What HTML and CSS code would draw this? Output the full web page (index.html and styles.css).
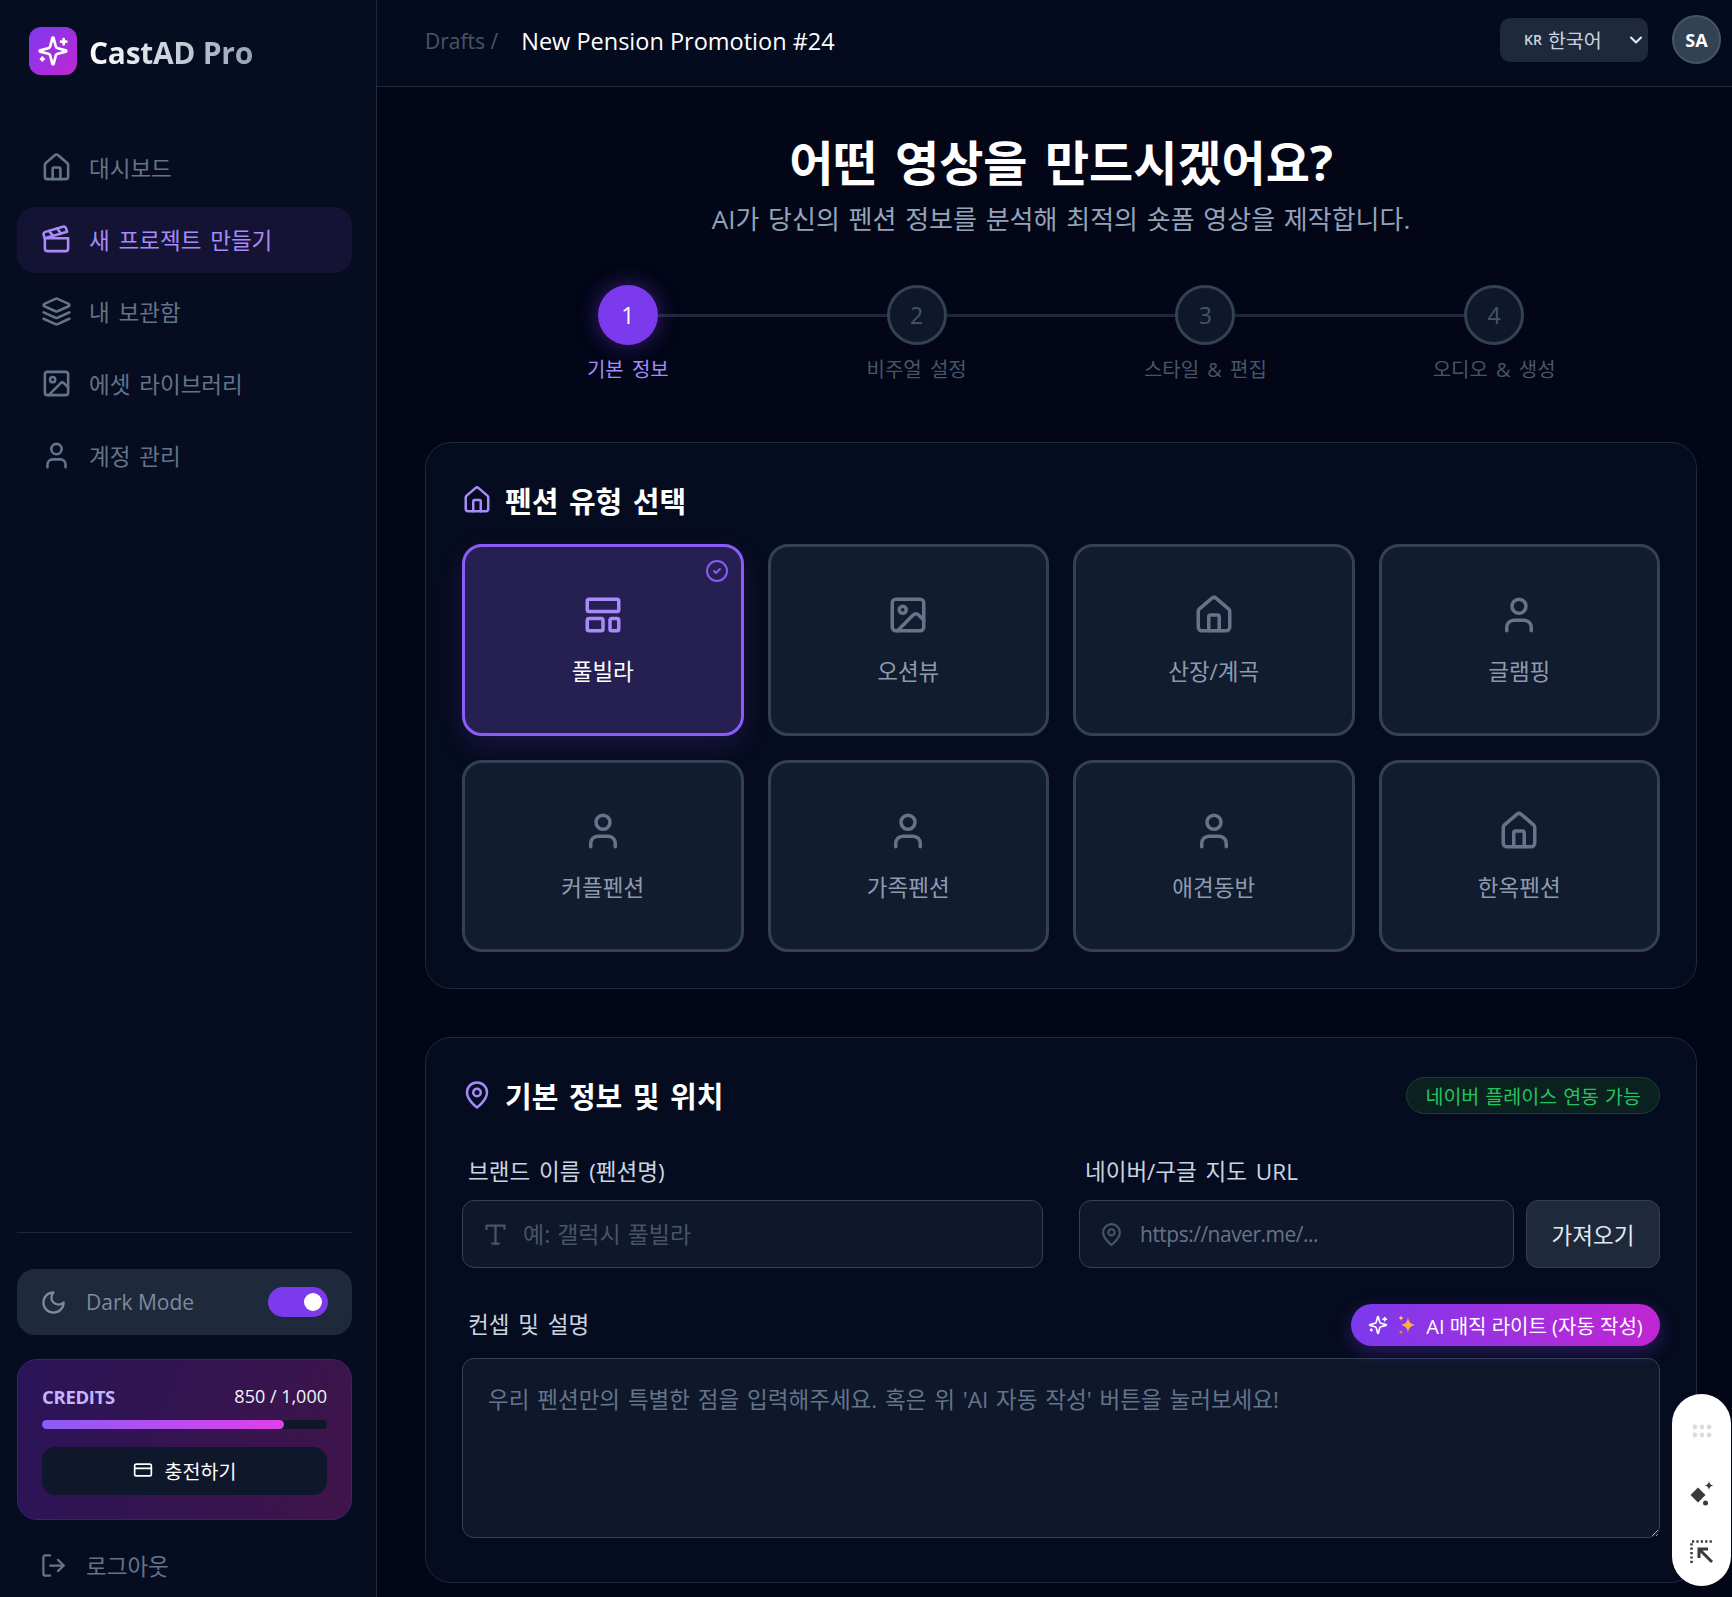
FILE: index.html
```html
<!doctype html>
<html lang="ko">
  <head>
    <meta charset="UTF-8" />
    <meta name="viewport" content="width=device-width, initial-scale=1.0" />
    <title>CastAD Pro</title>
    <link rel="stylesheet" href="styles.css">
  </head>
  <body>
    <aside class="sidebar">
      <div class="brand">
        <div class="brand-logo">
          <svg class="icon" width="32" height="32" viewBox="0 0 24 24"><path d="M9.937 15.5A2 2 0 0 0 8.5 14.063l-6.135-1.582a.5.5 0 0 1 0-.962L8.5 9.936A2 2 0 0 0 9.937 8.5l1.582-6.135a.5.5 0 0 1 .963 0L14.063 8.5A2 2 0 0 0 15.5 9.937l6.135 1.581a.5.5 0 0 1 0 .964L15.5 14.063a2 2 0 0 0-1.437 1.437l-1.582 6.135a.5.5 0 0 1-.963 0z"/><path d="M20 3v4M22 5h-4M4 17v2M5 18H3"/></svg>
        </div>
        <span class="brand-name">CastAD Pro</span>
      </div>

      <nav class="nav">
        <a class="nav-item">
          <svg class="icon" width="31" height="31" viewBox="0 0 24 24"><path d="M15 21v-8a1 1 0 0 0-1-1h-4a1 1 0 0 0-1 1v8"/><path d="M3 10a2 2 0 0 1 .709-1.528l7-5.999a2 2 0 0 1 2.582 0l7 5.999A2 2 0 0 1 21 10v9a2 2 0 0 1-2 2H5a2 2 0 0 1-2-2z"/></svg>
          대시보드
        </a>
        <a class="nav-item active">
          <svg class="icon" width="31" height="31" viewBox="0 0 24 24"><path d="M20.2 6 3 11l-.9-2.4c-.3-1.1.3-2.2 1.3-2.5l13.5-4c1.1-.3 2.2.3 2.5 1.3Z"/><path d="m6.2 5.3 3.1 3.9M12.4 3.4l3.1 4"/><path d="M3 11h18v8a2 2 0 0 1-2 2H5a2 2 0 0 1-2-2Z"/></svg>
          새 프로젝트 만들기
        </a>
        <a class="nav-item">
          <svg class="icon" width="31" height="31" viewBox="0 0 24 24"><path d="m12.83 2.18a2 2 0 0 0-1.66 0L2.6 6.08a1 1 0 0 0 0 1.83l8.58 3.91a2 2 0 0 0 1.66 0l8.58-3.9a1 1 0 0 0 0-1.83Z"/><path d="m22 17.65-9.17 4.16a2 2 0 0 1-1.66 0L2 17.65"/><path d="m22 12.65-9.17 4.16a2 2 0 0 1-1.66 0L2 12.65"/></svg>
          내 보관함
        </a>
        <a class="nav-item">
          <svg class="icon" width="31" height="31" viewBox="0 0 24 24"><rect x="3" y="3" width="18" height="18" rx="2"/><circle cx="9" cy="9" r="2"/><path d="m21 15-3.086-3.086a2 2 0 0 0-2.828 0L6 21"/></svg>
          에셋 라이브러리
        </a>
        <a class="nav-item">
          <svg class="icon" width="31" height="31" viewBox="0 0 24 24"><path d="M19 21v-2a4 4 0 0 0-4-4H9a4 4 0 0 0-4 4v2"/><circle cx="12" cy="7" r="4"/></svg>
          계정 관리
        </a>
      </nav>

      <div class="sidebar-foot">
        <div class="theme-row">
          <svg class="icon" width="27" height="27" viewBox="0 0 24 24"><path d="M12 3a6 6 0 0 0 9 9 9 9 0 1 1-9-9Z"/></svg>
          <span class="theme-label">Dark Mode</span>
          <span class="toggle"><span class="knob"></span></span>
        </div>

        <div class="credits">
          <div class="credits-top">
            <span class="credits-title">CREDITS</span>
            <span>850 / 1,000</span>
          </div>
          <div class="bar"><div class="bar-fill" style="width: 85%"></div></div>
          <button class="charge-btn">
            <svg class="icon" width="20" height="20" viewBox="0 0 24 24"><rect x="2" y="5" width="20" height="14" rx="2"/><path d="M2 10h20"/></svg>
            충전하기
          </button>
        </div>

        <a class="logout">
          <svg class="icon" width="27" height="27" viewBox="0 0 24 24"><path d="M9 21H5a2 2 0 0 1-2-2V5a2 2 0 0 1 2-2h4"/><path d="m16 17 5-5-5-5"/><path d="M21 12H9"/></svg>
          로그아웃
        </a>
      </div>
    </aside>

    <div class="main">
      <header class="topbar">
        <div class="crumbs">
          <span class="crumb-parent">Drafts /</span>
          <span class="crumb-current">New Pension Promotion #24</span>
        </div>
        <div class="lang">
          <span class="lang-flag">KR</span> 한국어
          <svg class="icon lang-caret" width="20" height="20" viewBox="0 0 24 24"><path d="m6 9 6 6 6-6"/></svg>
        </div>
        <div class="avatar">SA</div>
      </header>

      <main class="content">
        <div class="hero">
          <h1>어떤 영상을 만드시겠어요?</h1>
          <p>AI가 당신의 펜션 정보를 분석해 최적의 숏폼 영상을 제작합니다.</p>
        </div>

        <ol class="steps">
          <li class="step active"><span class="step-num">1</span><span class="step-label">기본 정보</span></li>
          <li class="step"><span class="step-num">2</span><span class="step-label">비주얼 설정</span></li>
          <li class="step"><span class="step-num">3</span><span class="step-label">스타일 &amp; 편집</span></li>
          <li class="step"><span class="step-num">4</span><span class="step-label">오디오 &amp; 생성</span></li>
        </ol>

        <section class="panel panel-types">
          <div class="panel-head">
            <h2>
              <svg class="icon accent" width="30" height="30" viewBox="0 0 24 24"><path d="M15 21v-8a1 1 0 0 0-1-1h-4a1 1 0 0 0-1 1v8"/><path d="M3 10a2 2 0 0 1 .709-1.528l7-5.999a2 2 0 0 1 2.582 0l7 5.999A2 2 0 0 1 21 10v9a2 2 0 0 1-2 2H5a2 2 0 0 1-2-2z"/></svg>
              펜션 유형 선택
            </h2>
          </div>
          <div class="type-grid">
            <button class="type-card selected">
              <svg class="icon check" width="24" height="24" viewBox="0 0 24 24"><circle cx="12" cy="12" r="10"/><path d="m9 12 2 2 4-4"/></svg>
              <svg class="icon" width="42" height="42" viewBox="0 0 24 24"><rect x="3" y="3" width="18" height="7" rx="1"/><rect x="3" y="14" width="9" height="7" rx="1"/><rect x="16" y="14" width="5" height="7" rx="1"/></svg>
              풀빌라
            </button>
            <button class="type-card">
              <svg class="icon" width="42" height="42" viewBox="0 0 24 24"><rect x="3" y="3" width="18" height="18" rx="2"/><circle cx="9" cy="9" r="2"/><path d="m21 15-3.086-3.086a2 2 0 0 0-2.828 0L6 21"/></svg>
              오션뷰
            </button>
            <button class="type-card">
              <svg class="icon" width="42" height="42" viewBox="0 0 24 24"><path d="M15 21v-8a1 1 0 0 0-1-1h-4a1 1 0 0 0-1 1v8"/><path d="M3 10a2 2 0 0 1 .709-1.528l7-5.999a2 2 0 0 1 2.582 0l7 5.999A2 2 0 0 1 21 10v9a2 2 0 0 1-2 2H5a2 2 0 0 1-2-2z"/></svg>
              산장/계곡
            </button>
            <button class="type-card">
              <svg class="icon" width="42" height="42" viewBox="0 0 24 24"><path d="M19 21v-2a4 4 0 0 0-4-4H9a4 4 0 0 0-4 4v2"/><circle cx="12" cy="7" r="4"/></svg>
              글램핑
            </button>
            <button class="type-card">
              <svg class="icon" width="42" height="42" viewBox="0 0 24 24"><path d="M19 21v-2a4 4 0 0 0-4-4H9a4 4 0 0 0-4 4v2"/><circle cx="12" cy="7" r="4"/></svg>
              커플펜션
            </button>
            <button class="type-card">
              <svg class="icon" width="42" height="42" viewBox="0 0 24 24"><path d="M19 21v-2a4 4 0 0 0-4-4H9a4 4 0 0 0-4 4v2"/><circle cx="12" cy="7" r="4"/></svg>
              가족펜션
            </button>
            <button class="type-card">
              <svg class="icon" width="42" height="42" viewBox="0 0 24 24"><path d="M19 21v-2a4 4 0 0 0-4-4H9a4 4 0 0 0-4 4v2"/><circle cx="12" cy="7" r="4"/></svg>
              애견동반
            </button>
            <button class="type-card">
              <svg class="icon" width="42" height="42" viewBox="0 0 24 24"><path d="M15 21v-8a1 1 0 0 0-1-1h-4a1 1 0 0 0-1 1v8"/><path d="M3 10a2 2 0 0 1 .709-1.528l7-5.999a2 2 0 0 1 2.582 0l7 5.999A2 2 0 0 1 21 10v9a2 2 0 0 1-2 2H5a2 2 0 0 1-2-2z"/></svg>
              한옥펜션
            </button>
          </div>
        </section>

        <section class="panel panel-info">
          <div class="panel-head">
            <h2>
              <svg class="icon accent" width="30" height="30" viewBox="0 0 24 24"><path d="M20 10c0 6-8 12-8 12s-8-6-8-12a8 8 0 0 1 16 0Z"/><circle cx="12" cy="10" r="3"/></svg>
              기본 정보 및 위치
            </h2>
            <span class="badge">네이버 플레이스 연동 가능</span>
          </div>

          <div class="field-grid">
            <div class="field">
              <label class="field-label">브랜드 이름 (펜션명)</label>
              <div class="input-box">
                <svg class="icon" width="27" height="27" viewBox="0 0 24 24"><path d="M4 7V4h16v3"/><path d="M9 20h6"/><path d="M12 4v16"/></svg>
                <input type="text" placeholder="예: 갤럭시 풀빌라" />
              </div>
            </div>
            <div class="field">
              <label class="field-label">네이버/구글 지도 URL</label>
              <div class="input-row">
                <div class="input-box">
                  <svg class="icon" width="25" height="25" viewBox="0 0 24 24"><path d="M20 10c0 6-8 12-8 12s-8-6-8-12a8 8 0 0 1 16 0Z"/><circle cx="12" cy="10" r="3"/></svg>
                  <input class="url-input" type="text" placeholder="https://naver.me/..." />
                </div>
                <button class="fetch-btn">가져오기</button>
              </div>
            </div>
          </div>

          <div class="concept-head">
            <label class="field-label">컨셉 및 설명</label>
            <button class="magic-btn">
              <svg class="icon" width="20" height="20" viewBox="0 0 24 24"><path d="M9.937 15.5A2 2 0 0 0 8.5 14.063l-6.135-1.582a.5.5 0 0 1 0-.962L8.5 9.936A2 2 0 0 0 9.937 8.5l1.582-6.135a.5.5 0 0 1 .963 0L14.063 8.5A2 2 0 0 0 15.5 9.937l6.135 1.581a.5.5 0 0 1 0 .964L15.5 14.063a2 2 0 0 0-1.437 1.437l-1.582 6.135a.5.5 0 0 1-.963 0z"/><path d="M20 3v4M22 5h-4M4 17v2M5 18H3"/></svg>
              <svg width="20" height="22" viewBox="0 0 20 22"><path fill="#fbb040" d="M11 3c.8 5 2 6.500 7 8-5 1.500-6.200 3-7 8-.8-5-2-6.500-7-8 5-1.500 6.200-3 7-8z"/><path fill="#fcd34d" d="M4 1c.3 1.800.8 2.400 2.500 3C4.800 4.600 4.300 5.200 4 7c-.3-1.800-.8-2.400-2.500-3C3.200 3.400 3.700 2.800 4 1z"/><path fill="#f59e0b" d="M4 16c.2 1.300.6 1.800 2 2.200-1.400.5-1.800 1-2 2.300-.2-1.300-.6-1.800-2-2.300 1.400-.4 1.800-.9 2-2.200z"/></svg>
              AI 매직 라이트 (자동 작성)
            </button>
          </div>
          <textarea placeholder="우리 펜션만의 특별한 점을 입력해주세요. 혹은 위 'AI 자동 작성' 버튼을 눌러보세요!"></textarea>
        </section>
      </main>
    </div>

    <div class="float-tools">
      <svg width="20" height="14" viewBox="0 0 20 14" fill="#dcdcdc"><circle cx="3" cy="3" r="2.400"/><circle cx="10" cy="3" r="2.400"/><circle cx="17" cy="3" r="2.400"/><circle cx="3" cy="11" r="2.400"/><circle cx="10" cy="11" r="2.400"/><circle cx="17" cy="11" r="2.400"/></svg>
      <svg width="28" height="28" viewBox="0 0 28 28" fill="#3a3a3a"><path d="M10 7.500l7.500 7.500-7.500 7.500L2.500 15z"/><path d="M21 1c.6 3 1.400 3.800 4.500 4.500C22.400 6.200 21.600 7 21 10c-.6-3-1.400-3.800-4.500-4.500C19.600 4.800 20.400 4 21 1z"/><circle cx="17.500" cy="23" r="2.500"/></svg>
      <svg width="24" height="24" viewBox="0 0 24 24" fill="none" stroke="#3a3a3a"><path d="M1.500 23V1.500H23" stroke-width="2.500" stroke-dasharray="2.200 2.200"/><path d="M22 22 10 10M9 18V9h9" stroke-width="3"/></svg>
    </div>
  </body>
</html>
```

FILE: styles.css
```css
* {
  box-sizing: border-box;
}
body {
  margin: 0;
  display: flex;
  height: 100vh;
  overflow: hidden;
  background: #020617;
  color: #fff;
  font-family: 'Open Sans', 'Noto Sans CJK KR', sans-serif;
}
button,
input,
textarea {
  font-family: inherit;
}
.icon {
  fill: none;
  stroke: currentColor;
  stroke-width: 2;
  stroke-linecap: round;
  stroke-linejoin: round;
  flex-shrink: 0;
}
.accent {
  color: #a78bfa;
}

/* sidebar */
.sidebar {
  width: 377px;
  flex-shrink: 0;
  display: flex;
  flex-direction: column;
  padding: 27px 24px 8px 17px;
  background: #070d20;
  border-right: 1px solid #1e293b;
}
.brand {
  display: flex;
  align-items: center;
  gap: 12px;
  padding-left: 12px;
}
.brand-logo {
  width: 48px;
  height: 48px;
  border-radius: 12px;
  display: flex;
  align-items: center;
  justify-content: center;
  background: linear-gradient(135deg, #7c3aed, #c026d3);
  color: #fff;
}
.brand-name {
  padding-top: 2px;
  font-size: 30px;
  font-weight: 700;
  letter-spacing: -0.3px;
  background: linear-gradient(90deg, #fff, #94a3b8);
  -webkit-background-clip: text;
  background-clip: text;
  color: transparent;
}
.nav {
  margin-top: 60px;
  display: flex;
  flex-direction: column;
  gap: 6px;
}
.nav-item {
  height: 66px;
  display: flex;
  align-items: center;
  gap: 17px;
  padding: 0 0 2px 24px;
  border-radius: 18px;
  font-size: 22.5px;
  word-spacing: 3px;
  color: #64748b;
}
.nav-item.active {
  background: #151333;
  color: #a78bfa;
}
.sidebar-foot {
  margin-top: auto;
  border-top: 1px solid #1e293b;
  padding-top: 36px;
}
.theme-row {
  height: 66px;
  display: flex;
  align-items: center;
  padding: 0 24px 0 23px;
  border-radius: 18px;
  background: #1e293b;
  color: #94a3b8;
}
.theme-row .icon {
  color: #7c8ba1;
}
.theme-label {
  margin-left: 19px;
  font-size: 21px;
  color: #7c8ba1;
}
.toggle {
  margin-left: auto;
  width: 60px;
  height: 30px;
  border-radius: 15px;
  background: #7c3aed;
  display: flex;
  align-items: center;
  justify-content: flex-end;
  padding-right: 6px;
}
.knob {
  width: 18px;
  height: 18px;
  border-radius: 50%;
  background: #fff;
}
.credits {
  margin-top: 24px;
  height: 161px;
  padding: 23px 24px 0;
  border-radius: 20px;
  border: 1px solid #3b2170;
  background: linear-gradient(110deg, #2a1458, #40144a);
}
.credits-top {
  display: flex;
  justify-content: space-between;
  align-items: center;
  height: 26px;
  font-size: 18px;
  color: #f1f5f9;
}
.credits-title {
  font-size: 18.5px;
  font-weight: 700;
  color: #c4b5fd;
  letter-spacing: -0.3px;
}
.bar {
  margin-top: 11px;
  height: 9px;
  border-radius: 5px;
  background: #0f172a;
}
.bar-fill {
  height: 100%;
  border-radius: 5px;
  background: linear-gradient(90deg, #8b5cf6, #e040e8);
}
.charge-btn {
  margin-top: 18px;
  width: 100%;
  height: 48px;
  display: flex;
  align-items: center;
  justify-content: center;
  gap: 12px;
  padding: 0 0 2px;
  border: none;
  border-radius: 14px;
  background: #0f172a;
  color: #fff;
  font-size: 19.5px;
}
.logout {
  margin-top: 21px;
  height: 48px;
  display: flex;
  align-items: center;
  gap: 19px;
  padding-left: 23px;
  font-size: 22.5px;
  color: #64748b;
}

/* top bar */
.main {
  flex: 1;
  min-width: 0;
  display: flex;
  flex-direction: column;
}
.topbar {
  height: 87px;
  flex-shrink: 0;
  display: flex;
  align-items: center;
  padding: 0 11px 7px 48px;
  background: #050b1e;
  border-bottom: 1px solid #1e293b;
}
.crumbs {
  display: flex;
  align-items: center;
  gap: 23px;
  padding-top: 2px;
  margin-right: auto;
}
.crumb-parent {
  font-size: 21px;
  color: #475569;
}
.crumb-current {
  font-size: 23.5px;
  color: #fff;
  font-weight: 500;
}
.lang {
  width: 148px;
  height: 44px;
  display: flex;
  align-items: center;
  padding-left: 24px;
  gap: 6px;
  border-radius: 10px;
  background: #1e293b;
  font-size: 19.5px;
  color: #cbd5e1;
}
.lang-flag {
  font-size: 14px;
  font-weight: 600;
}
.lang-caret {
  margin-left: auto;
  margin-right: 2px;
  color: #e2e8f0;
  stroke-width: 2.5;
}
.avatar {
  margin-left: 24px;
  width: 49px;
  height: 49px;
  border-radius: 50%;
  border: 2px solid #475569;
  background: #334155;
  display: flex;
  align-items: center;
  justify-content: center;
  font-size: 18px;
  font-weight: 700;
}

/* content */
.content {
  flex: 1;
  padding: 0 35px 0 48px;
}
.hero {
  padding-top: 42px;
  text-align: center;
}
.hero h1 {
  margin: 0;
  font-size: 48px;
  line-height: 68px;
  font-weight: 700;
  word-spacing: 5px;
}
.hero p {
  margin: 4px 0 0;
  font-size: 26px;
  line-height: 36px;
  word-spacing: 2px;
  color: #94a3b8;
}
.steps {
  list-style: none;
  margin: 48px auto 0;
  padding: 0;
  width: 1155px;
  display: grid;
  grid-template-columns: repeat(4, 1fr);
}
.step {
  position: relative;
  display: flex;
  flex-direction: column;
  align-items: center;
  gap: 7px;
}
.step:not(:last-child)::before {
  content: '';
  position: absolute;
  left: 50%;
  width: 100%;
  top: 29px;
  height: 3px;
  background: #1e293b;
}
.step-num {
  position: relative;
  width: 60px;
  height: 60px;
  border-radius: 50%;
  border: 3px solid #334155;
  background: #0f172a;
  display: flex;
  align-items: center;
  justify-content: center;
  font-size: 23px;
  color: #475569;
}
.step-label {
  font-size: 20px;
  line-height: 36px;
  word-spacing: 3px;
  color: #475569;
}
.step.active .step-num {
  border: none;
  background: #7c3aed;
  color: #fff;
  box-shadow: 0 0 22px rgba(124, 58, 237, 0.45);
}
.step.active .step-label {
  color: #a78bfa;
}
.panel {
  padding: 39px 36px 0;
  border: 1px solid #1e293b;
  border-radius: 26px;
  background: #060c1f;
}
.panel-types {
  margin-top: 54px;
  height: 547px;
}
.panel-info {
  margin-top: 48px;
  height: 546px;
}
.panel-head {
  height: 36px;
  display: flex;
  align-items: center;
  justify-content: space-between;
  margin-bottom: 26px;
}
.panel-head h2 {
  margin: 0;
  display: flex;
  align-items: center;
  gap: 13px;
  font-size: 29px;
  font-weight: 700;
  word-spacing: 3px;
}
.type-grid {
  display: grid;
  grid-template-columns: repeat(4, 1fr);
  grid-auto-rows: 192px;
  gap: 24px;
}
.type-card {
  position: relative;
  display: flex;
  flex-direction: column;
  align-items: center;
  justify-content: center;
  gap: 18px;
  padding: 2px 0;
  border: 3px solid #334155;
  border-radius: 20px;
  background: #121c2f;
  color: #8d9bb0;
  font-size: 22.5px;
}
.type-card .icon {
  color: #64748b;
}
.type-card.selected {
  border-color: #8b5cf6;
  background: #261f52;
  color: #fff;
  box-shadow: 0 10px 26px rgba(124, 58, 237, 0.16);
}
.type-card.selected .icon {
  color: #a78bfa;
}
.type-card .check {
  position: absolute;
  top: 12px;
  right: 12px;
}
.type-card.selected .check {
  color: #8b5cf6;
}
.badge {
  height: 37px;
  display: flex;
  align-items: center;
  padding: 0 18px;
  border-radius: 19px;
  border: 1px solid #14432f;
  background: #0b2120;
  color: #22c55e;
  font-size: 19.5px;
  word-spacing: 1px;
}
.field-grid {
  display: grid;
  grid-template-columns: 1fr 1fr;
  gap: 36px;
}
.field-label {
  display: block;
  padding-left: 6px;
  font-size: 22.5px;
  line-height: 30px;
  word-spacing: 3px;
  color: #cbd5e1;
}
.field {
  padding-top: 18px;
}
.field .field-label {
  margin-bottom: 13px;
}
.input-box {
  flex: 1;
  height: 68px;
  display: flex;
  align-items: center;
  gap: 12px;
  padding-left: 19px;
  border: 1px solid #334155;
  border-radius: 12px;
  background: #0f172a;
  color: #475569;
}
.input-box input {
  flex: 1;
  min-width: 0;
  border: none;
  outline: none;
  background: none;
  color: #fff;
  font-size: 23px;
  word-spacing: 1px;
}
.input-box input::placeholder {
  color: #475569;
}
.input-box .url-input {
  font-size: 21px;
  letter-spacing: -0.5px;
  margin-left: 2px;
}
.input-box .url-input::placeholder {
  color: #64748b;
}
.input-row {
  display: flex;
  gap: 12px;
}
.fetch-btn {
  width: 134px;
  height: 68px;
  border: 1px solid #334155;
  border-radius: 12px;
  background: #1e293b;
  color: #e2e8f0;
  font-size: 22.5px;
}
.concept-head {
  margin-top: 36px;
  height: 42px;
  display: flex;
  align-items: center;
  justify-content: space-between;
}
.magic-btn {
  width: 309px;
  height: 42px;
  display: flex;
  align-items: center;
  justify-content: center;
  gap: 9px;
  border: none;
  border-radius: 21px;
  background: linear-gradient(90deg, #7c3aed, #c026d3);
  box-shadow: 0 6px 18px rgba(124, 58, 237, 0.3);
  color: #fff;
  font-size: 20px;
  white-space: nowrap;
}
textarea {
  display: block;
  width: 100%;
  height: 180px;
  margin-top: 12px;
  padding: 25px 25px;
  border: 1px solid #334155;
  border-radius: 12px;
  background: #0f172a;
  color: #fff;
  font-size: 22.5px;
  word-spacing: 2px;
  line-height: 32px;
  outline: none;
}
textarea::placeholder {
  color: #64748b;
}

/* floating widget */
.float-tools {
  position: absolute;
  left: 1672px;
  top: 1394px;
  width: 59px;
  height: 192px;
  border-radius: 30px;
  background: #fff;
  display: flex;
  flex-direction: column;
  align-items: center;
  padding: 30px 0 0;
}
.float-tools svg:nth-child(2) {
  margin-top: 42px;
}
.float-tools svg:nth-child(3) {
  margin-top: 32px;
}
```
